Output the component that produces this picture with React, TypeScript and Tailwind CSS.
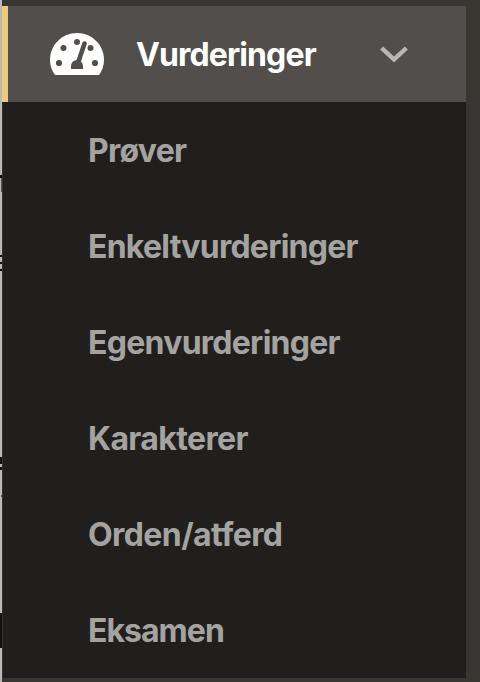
const items = [
  { label: "Prøver", tracking: "tracking-[-0.75px]" },
  { label: "Enkeltvurderinger", tracking: "tracking-[-0.75px]" },
  { label: "Egenvurderinger", tracking: "tracking-[-0.73px]" },
  { label: "Karakterer", tracking: "tracking-[-0.63px]" },
  { label: "Orden/atferd", tracking: "tracking-[-0.57px]" },
  { label: "Eksamen", tracking: "tracking-[-0.98px]" },
];

function GaugeIcon() {
  return (
    <svg className="ml-[42px] h-[42px] w-[54px] shrink-0" viewBox="0 0 54 42">
      <path
        d="M5 42C1.7 37.5 0 32.5 0 27C0 12 12 0 27 0S54 12 54 27C54 32.5 52.3 37.5 49 42Z"
        fill="#fff"
      />
      <g fill="#524e4b">
        <circle cx="13.5" cy="15" r="3" />
        <circle cx="27" cy="9" r="3" />
        <circle cx="40.5" cy="15" r="3" />
        <circle cx="9" cy="30" r="3.1" />
        <circle cx="45" cy="30" r="3.1" />
      </g>
      <path d="M34.5 10.5L28 31" stroke="#fff" strokeWidth="7.4" strokeLinecap="round" />
      <path d="M34.5 10.5L28 30" stroke="#524e4b" strokeWidth="4.6" strokeLinecap="round" />
      <path d="M21 36V33A6 6 0 0 1 33 33V36Z" fill="#524e4b" />
    </svg>
  );
}

function PageEdge() {
  return (
    <div className="flex w-[2px] shrink-0 flex-col bg-[#b9b9b7]">
      <div className="mt-[175px] h-[3px] bg-[#111]" />
      <div className="ml-px h-[14px] bg-[#555]" />
      <div className="mt-[63px] h-[2px] bg-[#111]" />
      <div className="mt-[5px] h-[2px] bg-[#111]" />
      <div className="mt-[5px] h-[2px] bg-[#111]" />
      <div className="mt-[186px] h-[7px] bg-[#111]" />
      <div className="mt-[3px] h-[3px] bg-[#111]" />
      <div className="mt-[25px] ml-px h-[2px] bg-[#555]" />
      <div className="mt-[116px] h-[35px] bg-[#111]" />
    </div>
  );
}

export default function App() {
  return (
    <div className="flex h-[682px] w-[480px] overflow-hidden bg-[#393531] font-['Inter','Liberation_Sans',sans-serif] text-[32px] font-bold">
      <PageEdge />
      <nav className="flex w-[464px] flex-col pt-[6px]">
        <button className="flex h-24 w-full shrink-0 items-center border-l-[6px] border-[#ebcc7c] bg-[#524e4b] text-left text-white">
          <GaugeIcon />
          <span className="ml-[32px] w-[244px] pt-[2px] tracking-[-0.88px]">Vurderinger</span>
          <svg className="h-[17px] w-[28px]" viewBox="0 0 28 17" fill="none">
            <path d="M1.6 2L14 13.4L26.4 2" stroke="#b8b6b4" strokeWidth="4.4" />
          </svg>
        </button>
        <ul className="h-[576px] border-l border-[#30302d] bg-[#201f1d] text-[#a5a3a1]">
          {items.map((item) => (
            <li key={item.label} className="flex h-24 items-center pt-[2px] pl-[85px]">
              <span className={item.tracking}>{item.label}</span>
            </li>
          ))}
        </ul>
      </nav>
    </div>
  );
}
